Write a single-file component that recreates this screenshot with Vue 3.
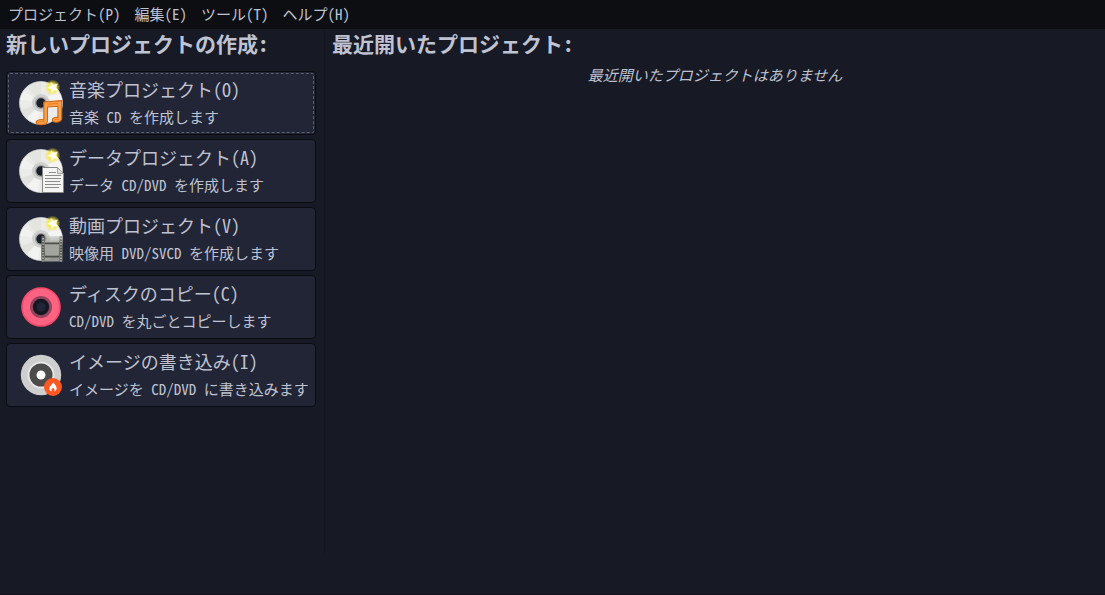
<script setup>
const menus = ['プロジェクト(P)', '編集(E)', 'ツール(T)', 'ヘルプ(H)']

const projects = [
  { icon: 'audio', title: '音楽プロジェクト(O)', text: '音楽 CD を作成します' },
  { icon: 'data', title: 'データプロジェクト(A)', text: 'データ CD/DVD を作成します' },
  { icon: 'video', title: '動画プロジェクト(V)', text: '映像用 DVD/SVCD を作成します' },
  { icon: 'copy', title: 'ディスクのコピー(C)', text: 'CD/DVD を丸ごとコピーします' },
  { icon: 'image', title: 'イメージの書き込み(I)', text: 'イメージを CD/DVD に書き込みます' },
]

const isNewDisc = (icon) => ['audio', 'data', 'video'].includes(icon)
</script>

<template>
  <div class="window">
    <nav class="menubar">
      <button v-for="menu in menus" :key="menu" type="button" class="menu">{{ menu }}</button>
    </nav>

    <main class="panes">
      <section class="create">
        <h2 class="heading">新しいプロジェクトの作成:</h2>
        <div class="projects">
          <button
            v-for="(project, index) in projects"
            :key="project.icon"
            type="button"
            class="project"
            :class="{ focused: index === 0 }"
          >
            <svg class="icon" viewBox="0 0 48 48" aria-hidden="true">
              <defs>
                <radialGradient :id="`glow-${project.icon}`">
                  <stop offset="0.4" stop-color="#f8ea2e" />
                  <stop offset="0.65" stop-color="#f6e838" stop-opacity="0.6" />
                  <stop offset="1" stop-color="#f3e128" stop-opacity="0" />
                </radialGradient>
                <linearGradient :id="`film-${project.icon}`" x1="0" y1="0" x2="0" y2="1">
                  <stop offset="0" stop-color="#b9bbb4" stop-opacity="0.4" />
                  <stop offset="0.3" stop-color="#a5a8a0" />
                  <stop offset="0.7" stop-color="#898c84" />
                  <stop offset="1" stop-color="#a5a8a0" stop-opacity="0.9" />
                </linearGradient>
                <linearGradient :id="`edge-${project.icon}`" x1="0" y1="21" x2="0" y2="47" gradientUnits="userSpaceOnUse">
                  <stop offset="0" stop-color="#4c5049" stop-opacity="0.3" />
                  <stop offset="0.25" stop-color="#4c5049" />
                  <stop offset="0.8" stop-color="#4c5049" />
                  <stop offset="1" stop-color="#4c5049" stop-opacity="0.5" />
                </linearGradient>
              </defs>

              <g v-if="isNewDisc(project.icon)">
                <circle cx="24" cy="24" r="21.5" fill="#ebebe9" stroke="#d2d2cf" stroke-width="0.8" />
                <path d="M24 24 10 8A21 21 0 0 1 24 3Z" fill="#e4e4e1" />
                <path d="M24 24 3 21A21 21 0 0 1 7 12Z" fill="#f1f1ef" />
                <path d="M24 24 4 31A21 21 0 0 0 10 39Z" fill="#e2e2df" />
                <path d="M24 24 10 39A21 21 0 0 0 21 45Z" fill="#f3f3f1" />
                <path d="M24 24 45 21A21 21 0 0 0 40 11Z" fill="#f4f4f2" />
                <circle cx="24" cy="24" r="9" fill="#d0d0ce" />
                <circle cx="24" cy="24" r="6" fill="#9c9da1" />
                <circle cx="24" cy="24" r="4.7" fill="#1a1d2a" />
                <circle cx="35.5" cy="8.5" r="8" :fill="`url(#glow-${project.icon})`" />
                <path
                  d="m33.9 3.2 2.7 2.5 3.9-.9-1.5 3.6 2.1 3.4-3.8-.5-2.6 2.8-.8-3.8-3.5-1.6 3.4-1.9Z"
                  fill="#fffff8"
                  stroke="#fbf490"
                  stroke-width="0.4"
                />
              </g>

              <g v-if="project.icon === 'audio'">
                <path
                  d="M26.8 23 44.7 21.6V39.6C44.7 42 42 43.3 38.8 43.2 35.2 43 34.2 40.9 36.4 39.2 37.8 38.2 39.7 38.1 40.9 38.6V27.2L30.5 28V42C30.3 44.6 27.2 45.9 23.2 45.7 18.6 45.4 18 42.7 21 41.3 22.9 40.4 25.4 40.5 26.8 41Z"
                  fill="#f9a04c"
                  stroke="#d9660d"
                  stroke-width="1.1"
                  stroke-linejoin="round"
                />
                <path d="M30.5 25.2 41 24.4M21.3 43.6C23 42.6 25.6 42.3 27.8 43M37 41C38.6 40.1 40.6 39.9 42.4 40.4" fill="none" stroke="#e87817" stroke-width="0.9" />
              </g>

              <g v-else-if="project.icon === 'data'">
                <path d="M25.5 20.5H40.5L46.5 26.5V45.5H25.5Z" fill="#f5f5f3" stroke="#858782" />
                <path d="M40.5 20.5V26.5H46.5Z" fill="#e0e1dd" stroke="#92948f" stroke-width="0.8" />
                <path
                  d="M32 25.5H39M28 28.5H44M28 31.5H44M28 34.5H43M28 37.5H44M28 40.5H42"
                  stroke="#8c8e89"
                  stroke-width="1"
                />
              </g>

              <g v-else-if="project.icon === 'video'">
                <rect x="24.5" y="21" width="21" height="25.5" :fill="`url(#film-${project.icon})`" />
                <path d="M24.5 21H27.5V46.5H24.5ZM42.5 21H45.5V46.5H42.5Z" :fill="`url(#edge-${project.icon})`" />
                <path d="M26 23V46.5M44 23V46.5" stroke="#d6d8d2" stroke-width="1.2" stroke-dasharray="1.4 1.4" />
                <path d="M28 28.5H42M28 41.5H42" stroke="#4d514a" stroke-width="1.8" />
                <path d="M28.2 29.5H41.8V40.5H28.2Z" fill="#a3a69e" />
              </g>

              <g v-else-if="project.icon === 'copy'">
                <circle cx="24" cy="24" r="19" fill="#ff6381" stroke="#f9486a" stroke-width="1.6" />
                <circle cx="24" cy="24" r="11" fill="#92445a" />
                <circle cx="24" cy="24" r="8.2" fill="#141722" />
                <circle cx="24" cy="24" r="4.5" fill="#222536" />
              </g>

              <g v-else>
                <circle cx="24" cy="24" r="20.2" fill="#cecece" />
                <circle cx="24" cy="24" r="13.5" fill="#e6e6e6" />
                <circle cx="24" cy="24" r="11.5" fill="#4b4b4b" />
                <circle cx="24" cy="24" r="4.5" fill="#fff" />
                <circle cx="36" cy="36" r="9" fill="#ff5722" />
                <path
                  d="M36.1 31C36.8 32.7 39.8 34.8 39.6 37.5 39.5 39.2 38.4 40.2 37.4 40.5 38 38.9 37.1 37.7 36 36.5 35 37.7 34 38.9 34.7 40.5 33.4 40.1 32.4 39.1 32.4 37.5 32.4 34.9 35.5 33.7 36.1 31Z"
                  fill="#fff"
                />
              </g>
            </svg>
            <span class="labels">
              <span class="title">{{ project.title }}</span>
              <span class="text">{{ project.text }}</span>
            </span>
          </button>
        </div>
      </section>

      <section class="recent">
        <h2 class="heading">最近開いたプロジェクト:</h2>
        <p class="empty">最近開いたプロジェクトはありません</p>
      </section>
    </main>
  </div>
</template>

<style>
body {
  margin: 0;
  background: #171925;
}
</style>

<style scoped>
.window {
  box-sizing: border-box;
  display: flex;
  flex-direction: column;
  min-height: 100vh;
  padding-bottom: 40px;
  border-bottom: 1px solid #110f1b;
  background: #171924;
  color: #bec2d1;
  font-family: "Noto Sans CJK JP", sans-serif;
  font-feature-settings: "hwid" 1;
  font-size: 15px;
}

button {
  margin: 0;
  color: inherit;
  font: inherit;
  font-feature-settings: inherit;
  text-align: left;
}

.menubar {
  display: flex;
  align-items: flex-start;
  gap: 14px;
  height: 29px;
  padding: 0 8px;
  background: #0d0e12;
}

.menu {
  padding: 0;
  border: 0;
  background: none;
  line-height: 28px;
  white-space: nowrap;
}

.panes {
  display: grid;
  flex: 1;
  grid-template-columns: 324px 1fr;
}

.create {
  padding: 0 8px 0 6px;
}

.recent {
  padding: 0 7px;
  border-left: 1px solid #13151f;
}

.heading {
  margin: 0;
  font-size: 21px;
  font-weight: 700;
  line-height: 28px;
  white-space: nowrap;
}

.projects {
  display: flex;
  flex-direction: column;
  gap: 4px;
  margin-top: 14px;
}

.project {
  position: relative;
  display: flex;
  align-items: center;
  gap: 4px;
  padding: 4px 6px 4px 10px;
  border: 1px solid #0b0c12;
  border-radius: 4px;
  background: #222536;
}

.focused::after {
  position: absolute;
  inset: 1px;
  border: 1px dashed #5c6073;
  border-radius: 2px;
  content: "";
}

.icon {
  flex: none;
  width: 48px;
  height: 48px;
}

.labels {
  display: flex;
  flex-direction: column;
  line-height: 27px;
  white-space: nowrap;
}

.title {
  font-size: 18px;
}

.empty {
  margin: 4px 0 0;
  font-style: italic;
  line-height: 28px;
  text-align: center;
}
</style>
